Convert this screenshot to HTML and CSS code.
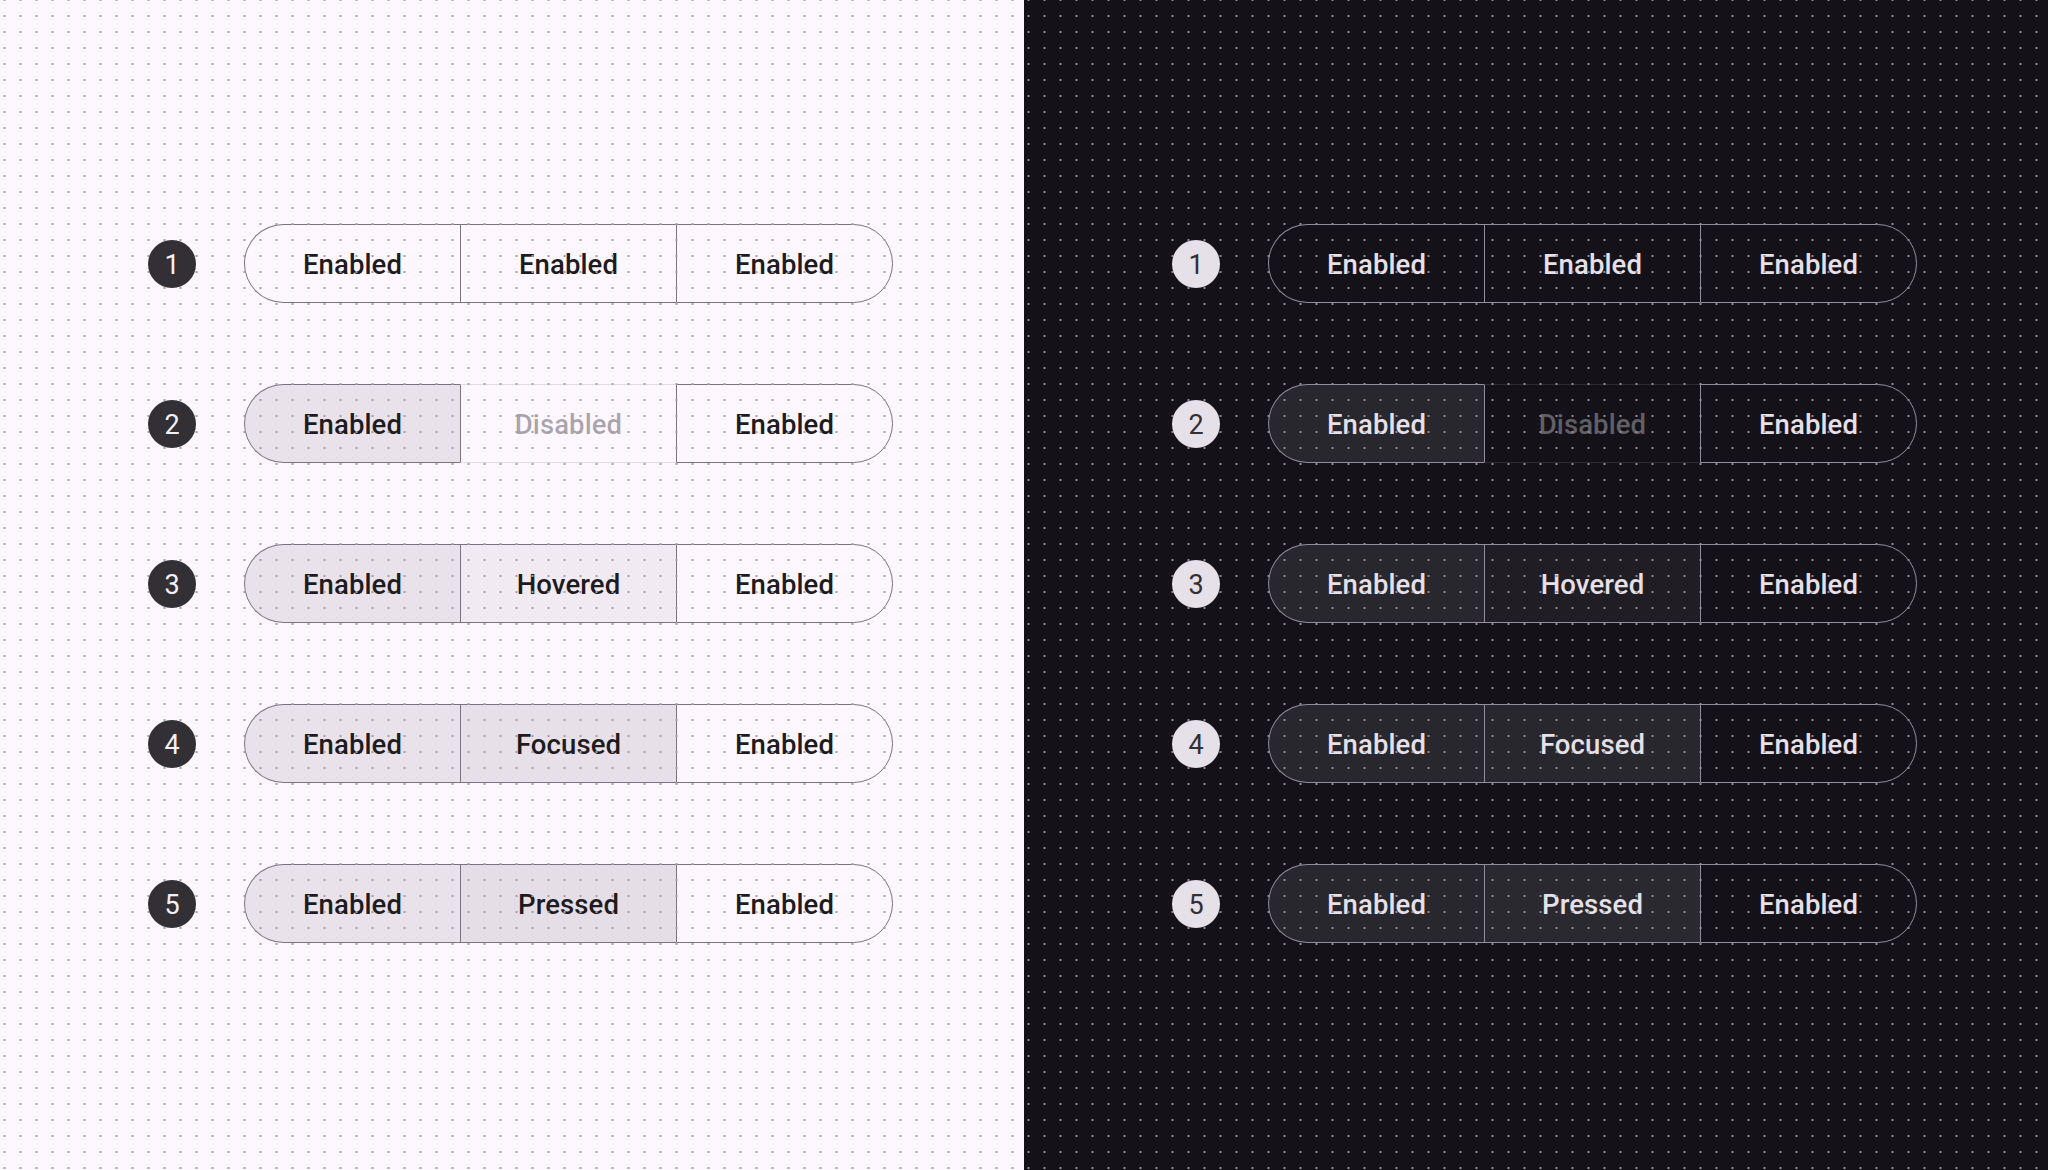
FILE: index.html
```html
<!DOCTYPE html>
<html lang="en">
<head>
<meta charset="utf-8">
<title>Segmented buttons</title>
<link rel="stylesheet" href="styles.css">
</head>
<body>
<div class="page">
  <section class="panel light">
    <div class="row">
      <span class="badge">1</span>
      <div class="seg">
        <div class="item">Enabled</div>
        <div class="item">Enabled</div>
        <div class="item">Enabled</div>
      </div>
    </div>
    <div class="row">
      <span class="badge">2</span>
      <div class="seg">
        <div class="item selected">Enabled</div>
        <div class="item disabled">Disabled</div>
        <div class="item">Enabled</div>
      </div>
    </div>
    <div class="row">
      <span class="badge">3</span>
      <div class="seg">
        <div class="item selected">Enabled</div>
        <div class="item hovered">Hovered</div>
        <div class="item">Enabled</div>
      </div>
    </div>
    <div class="row">
      <span class="badge">4</span>
      <div class="seg">
        <div class="item selected">Enabled</div>
        <div class="item focused">Focused</div>
        <div class="item">Enabled</div>
      </div>
    </div>
    <div class="row">
      <span class="badge">5</span>
      <div class="seg">
        <div class="item selected">Enabled</div>
        <div class="item pressed">Pressed</div>
        <div class="item">Enabled</div>
      </div>
    </div>
  </section>
  <section class="panel dark">
    <div class="row">
      <span class="badge">1</span>
      <div class="seg">
        <div class="item">Enabled</div>
        <div class="item">Enabled</div>
        <div class="item">Enabled</div>
      </div>
    </div>
    <div class="row">
      <span class="badge">2</span>
      <div class="seg">
        <div class="item selected">Enabled</div>
        <div class="item disabled">Disabled</div>
        <div class="item">Enabled</div>
      </div>
    </div>
    <div class="row">
      <span class="badge">3</span>
      <div class="seg">
        <div class="item selected">Enabled</div>
        <div class="item hovered">Hovered</div>
        <div class="item">Enabled</div>
      </div>
    </div>
    <div class="row">
      <span class="badge">4</span>
      <div class="seg">
        <div class="item selected">Enabled</div>
        <div class="item focused">Focused</div>
        <div class="item">Enabled</div>
      </div>
    </div>
    <div class="row">
      <span class="badge">5</span>
      <div class="seg">
        <div class="item selected">Enabled</div>
        <div class="item pressed">Pressed</div>
        <div class="item">Enabled</div>
      </div>
    </div>
  </section>
</div>
</body>
</html>
```
FILE: styles.css
```css
* { box-sizing: border-box; }
html, body { margin: 0; padding: 0; }
body {
  font-family: Roboto, "Liberation Sans", sans-serif;
  width: 2048px;
  height: 1170px;
  overflow: hidden;
}
.page {
  display: flex;
  width: 2048px;
  height: 1170px;
}
.panel {
  position: relative;
  width: 1024px;
  height: 1170px;
  display: flex;
  flex-direction: column;
  gap: 81px;
  padding: 224px 0 0 148px;
}
.panel::after {
  content: "";
  position: absolute;
  inset: 0;
  pointer-events: none;
  background-size: 16px 16px;
  background-position: 12.5px 8px;
}
.light {
  background: #FEF7FF;
  --outline: #79747E;
  --text: #1D1B20;
  --disabled-text: rgba(29, 27, 32, 0.38);
  --disabled-line: rgba(29, 27, 32, 0.12);
  --sel: rgba(29, 27, 32, 0.09);
  --hover: rgba(29, 27, 32, 0.06);
  --focus: rgba(29, 27, 32, 0.10);
  --press: rgba(29, 27, 32, 0.11);
  --badge-bg: #322F35;
  --badge-fg: #F5EFF7;
}
.light::after {
  background-image: radial-gradient(circle at 8px 8px, #A29DA6 0, #A29DA6 1px, rgba(162, 157, 166, 0) 1.5px);
}
.dark {
  background: #141218;
  --outline: #938F99;
  --text: #E6E0E9;
  --disabled-text: rgba(230, 224, 233, 0.38);
  --disabled-line: rgba(230, 224, 233, 0.12);
  --sel: rgba(230, 224, 233, 0.10);
  --hover: rgba(230, 224, 233, 0.06);
  --focus: rgba(230, 224, 233, 0.10);
  --press: rgba(230, 224, 233, 0.11);
  --badge-bg: #E6E0E9;
  --badge-fg: #322F35;
}
.dark::after {
  background-image: radial-gradient(circle at 8px 8px, #8E8A93 0, #8E8A93 1px, rgba(142, 138, 147, 0) 1.5px);
}
.row {
  display: flex;
  align-items: center;
  gap: 48px;
  height: 79px;
}
.badge {
  position: relative;
  z-index: 1;
  width: 48px;
  height: 48px;
  border-radius: 50%;
  background: var(--badge-bg);
  color: var(--badge-fg);
  display: flex;
  align-items: center;
  justify-content: center;
  padding-top: 2px;
  font-size: 27px;
  font-weight: 400;
  flex: none;
}
.seg {
  display: flex;
  width: 649px;
  height: 79px;
}
.item {
  flex: 1;
  display: flex;
  align-items: center;
  justify-content: center;
  padding-top: 2px;
  border-top: 1px solid var(--outline);
  border-bottom: 1px solid var(--outline);
  border-left: 1px solid var(--outline);
  color: var(--text);
  font-size: 27.5px;
  font-weight: 500;
  letter-spacing: 0.1px;
}
.item:first-child {
  border-radius: 40px 0 0 40px;
}
.item:last-child {
  border-right: 1px solid var(--outline);
  border-radius: 0 40px 40px 0;
}
.item.selected { background: var(--sel); }
.item.hovered { background: var(--hover); }
.item.focused { background: var(--focus); }
.item.pressed { background: var(--press); }
.item.disabled {
  color: var(--disabled-text);
  border-top-color: var(--disabled-line);
  border-bottom-color: var(--disabled-line);
}
```
